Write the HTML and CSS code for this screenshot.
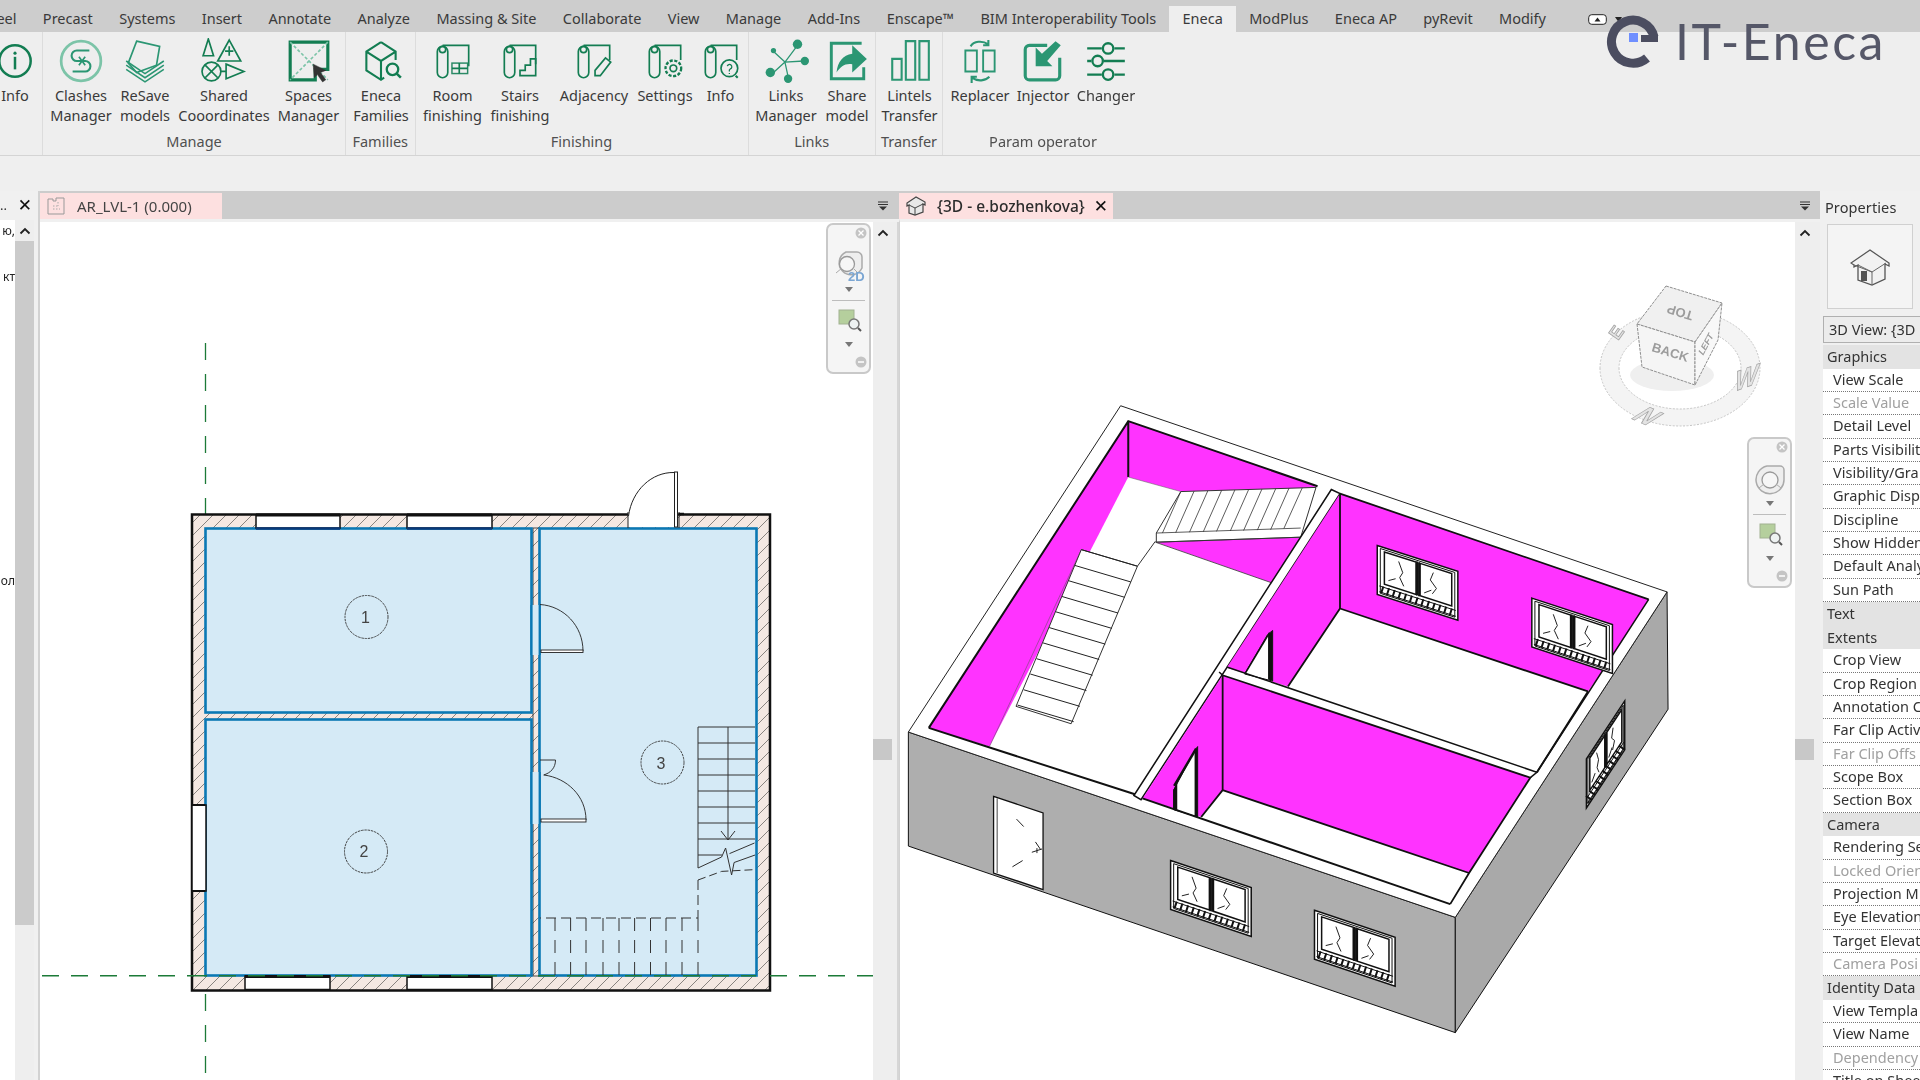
FILE: index.html
```html
<!DOCTYPE html>
<html lang="en">
<head>
<meta charset="utf-8">
<title>Revit - Eneca ribbon</title>
<link rel="stylesheet" href="styles.css">
</head>
<body>
<div class="app">
  <nav class="tabs">
    <span class="tab tab-cut">Steel</span><span class="tab">Precast</span><span class="tab">Systems</span><span class="tab">Insert</span><span class="tab">Annotate</span><span class="tab">Analyze</span><span class="tab">Massing &amp; Site</span><span class="tab">Collaborate</span><span class="tab">View</span><span class="tab">Manage</span><span class="tab">Add-Ins</span><span class="tab">Enscape™</span><span class="tab">BIM Interoperability Tools</span><span class="tab tab-on">Eneca</span><span class="tab">ModPlus</span><span class="tab">Eneca AP</span><span class="tab">pyRevit</span><span class="tab">Modify</span>
    <span class="min-btn"><svg width="19" height="11" viewBox="0 0 19 11"><rect x=".7" y=".7" width="17.6" height="9.6" rx="3" fill="#fff" stroke="#222"/><path d="M6.500 7.500h6L9.500 3.500z" fill="#222"/></svg><svg class="min-caret" width="7" height="5" viewBox="0 0 7 5"><path d="M0 0h7L3.500 5z" fill="#222"/></svg></span>
  </nav>

  <section class="ribbon">
    <div class="panel p-info">
      <div class="items">
        <div class="item"><svg class="ico" viewBox="0 0 44 44"><circle cx="22" cy="22" r="15" stroke-width="2.4"/><path d="M22 18v12" stroke-width="2.4"/><circle class="d" cx="22" cy="14.5" r="1.5"/></svg><span class="lbl">Info</span></div>
      </div>
      <div class="ptitle">&nbsp;</div>
    </div>
    <div class="panel p-manage">
      <div class="items">
        <div class="item"><svg class="ico" viewBox="0 0 44 44"><circle class="lt" cx="22" cy="22" r="19" stroke-width="2.6"/><path class="md" d="M30 12H18a5 5 0 0 0 0 10h4M14 32h12a5 5 0 0 0 0-10h-4" stroke-width="2"/><path class="md" d="M20 18l3 4-3 4M26 18l-3 4 3 4" stroke-width="1.6"/></svg><span class="lbl">Clashes<br>Manager</span></div>
        <div class="item"><svg class="ico" viewBox="0 0 44 44"><path class="md" d="M14 3l22 5-3 18-19 7-8-9z" stroke-width="1.6"/><path class="md" d="M4 26l18 12 18-12M4 30l18 12 18-12M4 22l18 12 18-12" stroke-width="1.5"/></svg><span class="lbl">ReSave<br>models</span></div>
        <div class="item"><svg class="ico" viewBox="0 0 44 44"><path d="M7 1l5 16H2z"/><path d="M27 2l11 20H16z"/><path d="M27 8v9M23 12.500h8"/><circle cx="10" cy="32" r="9"/><path d="M4 26l12 12M16 26L4 38"/><path d="M24 25l17 7-17 7zM19 32h5"/></svg><span class="lbl">Shared<br>Cooordinates</span></div>
        <div class="item"><svg class="ico" viewBox="0 0 44 44"><path d="M4 4h36v26H28v10H4z" stroke-width="3"/><path class="lt" d="M4 4l36 36M40 4L4 40" stroke-dasharray="3 2"/><path class="k" d="M26 25l12 6-5 2 5 7-3 2-5-7-3 3z"/></svg><span class="lbl">Spaces<br>Manager</span></div>
      </div>
      <div class="ptitle">Manage</div>
    </div>
    <div class="panel p-fam">
      <div class="items">
        <div class="item"><svg class="ico" viewBox="0 0 44 44"><path d="M22 4l14 9v8M22 4L8 13v18l14 9 3-2M8 13l14 9 14-9M22 22v17" stroke-width="2"/><circle cx="33" cy="30" r="5.500" stroke-width="2.200"/><path d="M37 34l4 4" stroke-width="2.400"/></svg><span class="lbl">Eneca<br>Families</span></div>
      </div>
      <div class="ptitle">Families</div>
    </div>
    <div class="panel p-fin">
      <div class="items">
        <div class="item"><svg class="ico" viewBox="0 0 44 44"><rect x="7" y="8" width="10" height="30" rx="5"/><circle cx="12" cy="11" r="3"/><path d="M12 7h25v20"/><rect class="m" x="21" y="24" width="15" height="10" stroke-width="1.400"/><path d="M21 29h15M28 24v10"/></svg><span class="lbl">Room<br>finishing</span></div>
        <div class="item"><svg class="ico" viewBox="0 0 44 44"><rect x="7" y="8" width="10" height="30" rx="5"/><circle cx="12" cy="11" r="3"/><path d="M12 7h25v18"/><path d="M22 36v-5h5v-5h5v-6h5v16z"/></svg><span class="lbl">Stairs<br>finishing</span></div>
        <div class="item"><svg class="ico" viewBox="0 0 44 44"><rect x="7" y="8" width="10" height="30" rx="5"/><circle cx="12" cy="11" r="3"/><path d="M12 7h25v14"/><path d="M23 36v-5l10-12 5 4-10 13z"/></svg><span class="lbl">Adjacency</span></div>
        <div class="item"><svg class="ico" viewBox="0 0 44 44"><rect x="7" y="8" width="10" height="30" rx="5"/><circle cx="12" cy="11" r="3"/><path d="M12 7h25v14"/><circle cx="30" cy="29" r="3.200"/><circle cx="30" cy="29" r="7.500" stroke-dasharray="3 1.500" stroke-width="2.200"/></svg><span class="lbl">Settings</span></div>
        <div class="item"><svg class="ico" viewBox="0 0 44 44"><rect x="7" y="8" width="10" height="30" rx="5"/><circle cx="12" cy="11" r="3"/><path d="M12 7h25v14"/><circle cx="30" cy="29" r="8"/><path d="M28 27a2.200 2.200 0 1 1 3 2.500l-1 1v1.500M30 33.500v1" stroke-width="1.200"/><path d="M36 36l2 2" stroke-width="2"/></svg><span class="lbl">Info</span></div>
      </div>
      <div class="ptitle">Finishing</div>
    </div>
    <div class="panel p-links">
      <div class="items">
        <div class="item"><svg class="ico" viewBox="0 0 44 44"><path class="md" d="M21 23L9 34M21 23l12-16M21 23L9 12M21 23l18-1M21 23l3 14" stroke-width="1.200"/><circle class="tf" cx="33" cy="6" r="4.500"/><circle class="tf" cx="7" cy="33" r="4.500"/><circle class="tf" cx="40" cy="22" r="4"/><circle class="tf" cx="24" cy="39" r="4"/><circle class="tf" cx="10" cy="12" r="2.500"/></svg><span class="lbl">Links<br>Manager</span></div>
        <div class="item"><svg class="ico" viewBox="0 0 44 44"><path class="md" d="M38 28v11H7V5h29" stroke-width="2.800"/><path class="tf" d="M27 7l14 13-14 13v-8c-7-1-11 2-15 8 1-10 6-17 15-18z"/></svg><span class="lbl">Share<br>model</span></div>
      </div>
      <div class="ptitle">Links</div>
    </div>
    <div class="panel p-trans">
      <div class="items">
        <div class="item"><svg class="ico" viewBox="0 0 44 44"><path class="md" d="M5 20h9v20H5zM18 3h9v37h-9zM31 3h9v37h-9z" stroke-width="2"/></svg><span class="lbl">Lintels<br>Transfer</span></div>
      </div>
      <div class="ptitle">Transfer</div>
    </div>
    <div class="panel p-param">
      <div class="items">
        <div class="item"><svg class="ico" viewBox="0 0 44 44"><path class="md" d="M8 12h11v20H8zM25 12h11v20H25z" stroke-width="1.800"/><path class="md" d="M13 8c3-5 11-6 17-2M30 2l0 5-5 0M31 37c-4 4-11 5-17 1M14 43v-6h5" stroke-width="2"/></svg><span class="lbl">Replacer</span></div>
        <div class="item"><svg class="ico" viewBox="0 0 44 44"><path class="md" d="M26 7H9a4 4 0 0 0-4 4v25a4 4 0 0 0 4 4h25a4 4 0 0 0 4-4V19" stroke-width="3"/><path class="tf" d="M34 3l5 4-13 15 5 5H15V9l6 6z"/></svg><span class="lbl">Injector</span></div>
        <div class="item"><svg class="ico" viewBox="0 0 44 44"><path d="M4 10h14M30 10h10M4 22h4M20 22h20M4 35h14M30 35h10" stroke-width="2.200"/><circle cx="24" cy="10" r="5" stroke-width="2.200"/><circle cx="14" cy="22" r="5" stroke-width="2.200"/><circle cx="24" cy="35" r="5" stroke-width="2.200"/></svg><span class="lbl">Changer</span></div>
      </div>
      <div class="ptitle">Param operator</div>
    </div>
  </section>

  <div class="optbar"></div>

  <main class="work">
    <aside class="browser">
      <div class="br-head"><span class="dots">..</span><span class="x">✕</span></div>
      <div class="br-body">
        <div class="br-text"><span class="l1">ю,</span><span class="l2">кт</span><span class="l3">ол</span></div>
        <div class="br-scroll"><div class="caret"><svg width="12" height="8" viewBox="0 0 12 8"><path d="M1.500 6.500L6 2l4.500 4.500" fill="none" stroke="#222" stroke-width="1.800"/></svg></div><div class="br-thumb"></div></div>
      </div>
    </aside>

    <section class="view view-l">
      <div class="strip">
        <div class="vtab vtab-l"><svg class="vtab-ico" width="18" height="18" viewBox="0 0 18 18"><path d="M1 2h5v2h3V1h8v16H1z" fill="none" stroke="#999"/><path d="M6 9h5M6 12h7M11 5v4" fill="none" stroke="#aaa" stroke-dasharray="1.500 1.500"/></svg><span>AR_LVL-1 (0.000)</span></div>
        <span class="list-ico"><svg width="10" height="10" viewBox="0 0 10 10"><path d="M0 1h10M0 3.500h10" stroke="#333"/><path d="M1 5.500h8L5 9.500z" fill="#333"/></svg></span>
      </div>
      <div class="vbody">
        <div class="canvas">
          <svg class="draw" viewBox="40 222 833 858">
            <defs>
              <pattern id="hatch" width="13" height="13" patternUnits="userSpaceOnUse"><rect width="13" height="13" fill="#f4e8e2"/><path d="M0 13L13 0" stroke="#7d7875" stroke-width=".9"/></pattern>
            </defs>
            <path d="M205.500 343V1080" stroke="#1c7a38" stroke-width="1.300" stroke-dasharray="17 14" fill="none"/>
            <rect x="192" y="514.500" width="578" height="476" fill="url(#hatch)" stroke="#111" stroke-width="2.500"/>
            <rect x="533" y="528" width="7" height="448" fill="url(#hatch)" stroke="#222" stroke-width=".8"/>
            <rect x="205.500" y="528.500" width="326" height="184" fill="#d5eaf6" stroke="#0b78b4" stroke-width="2.600"/>
            <rect x="205.500" y="719.500" width="326" height="256" fill="#d5eaf6" stroke="#0b78b4" stroke-width="2.600"/>
            <rect x="539.500" y="528.500" width="217" height="447" fill="#d5eaf6" stroke="#0b78b4" stroke-width="2.600"/>
            <!-- windows -->
            <g fill="#fff" stroke="#111" stroke-width="1.500">
              <rect x="256" y="515" width="84" height="13"/><rect x="407" y="515" width="85" height="13"/>
              <rect x="245" y="976" width="85" height="13.500"/><rect x="407" y="976" width="85" height="13.500"/>
              <rect x="192" y="805" width="14" height="86"/>
            </g>
            <path d="M256 515h84M407 515h85M245 976.500h85M407 976.500h85" stroke="#111" stroke-width="3.200" fill="none"/>
            <path d="M256 528.500h84M407 528.500h85" stroke="#0a3a7a" stroke-width="2.400" fill="none"/>
            <path d="M192 805h13M192 891h13" stroke="#111" stroke-width="2"/>
            <!-- entry door -->
            <rect x="628" y="510" width="50" height="17" fill="#fff"/>
            <path d="M628 512v16M679 512v16M628.500 516C632 490 652 472 674 472.500" fill="none" stroke="#222" stroke-width="1"/>
            <rect x="674.500" y="472" width="3" height="55" fill="#fff" stroke="#222"/>
            <path d="M679 514h5" stroke="#111" stroke-width="2.500"/>
            <!-- interior doors -->
            <rect x="531" y="605" width="9" height="50" fill="#d5eaf6"/>
            <rect x="531" y="772" width="9" height="52" fill="#d5eaf6"/>
            <path d="M531.500 605v50M531.500 772v52M539.700 605v50M539.700 772v52" stroke="#0b78b4" stroke-width="2.200"/>
            <path d="M540 604.500C564 606 583 626 583 651M544 775C567 778 586 796 586 820M540 760h15.500c0 8-5 13-12 15" fill="none" stroke="#222" stroke-width=".9"/>
            <rect x="541" y="650" width="42" height="2.500" fill="#fff" stroke="#222" stroke-width=".9"/>
            <rect x="541" y="819" width="45" height="3" fill="#fff" stroke="#222" stroke-width=".9"/>
            <!-- stairs -->
            <g fill="none" stroke="#333" stroke-width="1">
              <path d="M698 727h57M698 743h57M698 759h57M698 775h57M698 791h57M698 807h57M698 823h57M698 839h57M698 855h24"/>
              <path d="M698 727v141M728 727v112M721 831l7 9 7-9"/>
              <path d="M698 868l23.600-11 4-9 6 27 2.500-12.500 21-7.500M729.500 853.600l25-10.600"/>
              <path d="M698 880l23.600-8.600 33.400-1.800" stroke-dasharray="8 4"/>
              <path d="M698 880v38H540" stroke-dasharray="10 5"/>
              <path d="M555 918v58M570.600 918v58M586 918v58M603 918v58M619 918v58M634.600 918v58M650.500 918v58M666 918v58M682 918v58M698 918v58" stroke-dasharray="13 9"/>
            </g>
            <!-- tags -->
            <g fill="none" stroke="#333" stroke-width=".9" stroke-dasharray="2.500 .8">
              <circle cx="366.500" cy="617" r="21.500"/><circle cx="366" cy="851.500" r="21.500"/><circle cx="662.500" cy="762.500" r="21.500"/>
            </g>
            <g class="tag"><text x="361" y="623">1</text><text x="359.500" y="857">2</text><text x="656.500" y="769">3</text></g>
            <path d="M42 975.700H190M190 975.700H756M770 975.700H873" stroke="#1c7a38" stroke-width="1.500" stroke-dasharray="17 12" fill="none"/>
          </svg>
          <div class="navbar nav-l">
            <svg class="nb-close" width="12" height="12" viewBox="0 0 12 12"><circle cx="6" cy="6" r="5.500" fill="#c4c4c4"/><path d="M3.500 3.500l5 5M8.500 3.500l-5 5" stroke="#fff" stroke-width="1.300"/></svg>
            <svg class="nb-wheel" width="34" height="34" viewBox="0 0 34 34"><path d="M14 3h11a5 5 0 0 1 5 5v11a12 12 0 1 1-16-16z" fill="#eee" stroke="#aaa" stroke-width="1.500"/><circle cx="15" cy="15" r="7.500" fill="#f6f6f6" stroke="#999" stroke-width="1.300"/><path d="M4 24l6-5M22 20l4 4" stroke="#aaa"/><text class="t2d" x="16" y="32">2D</text></svg>
            <i class="nb-caret"></i><hr class="nb-rule">
            <svg class="nb-zoom" width="24" height="24" viewBox="0 0 24 24"><rect x="1" y="1" width="15" height="14" fill="#b5cf9d" stroke="#a2b292"/><circle cx="16" cy="15" r="5" fill="#eef2f2" stroke="#777" stroke-width="1.500"/><path d="M20 19l3 3" stroke="#555" stroke-width="2"/></svg>
            <i class="nb-caret"></i>
            <svg class="nb-min" width="12" height="12" viewBox="0 0 12 12"><circle cx="6" cy="6" r="5.500" fill="#c4c4c4"/><path d="M3 6h6" stroke="#fff" stroke-width="1.500"/></svg>
          </div>
        </div>
        <div class="vscroll"><div class="caret"><svg width="12" height="8" viewBox="0 0 12 8"><path d="M1.500 6.500L6 2l4.500 4.500" fill="none" stroke="#222" stroke-width="1.800"/></svg></div><div class="thumb"></div></div>
      </div>
    </section>

    <section class="view view-r">
      <div class="strip">
        <div class="vtab vtab-r"><svg class="vtab-ico" width="20" height="20" viewBox="0 0 20 20"><path d="M10 1L1 7v3l2-1v8l6 2 8-3V8l2 1V6z" fill="#e8e8e8" stroke="#444" stroke-width="1.200"/><path d="M3 9l6 3 8-4M9 12v7" fill="none" stroke="#444"/></svg><span>{3D - e.bozhenkova}</span><span class="x x-tab">✕</span></div>
        <span class="list-ico"><svg width="10" height="10" viewBox="0 0 10 10"><path d="M0 1h10M0 3.500h10" stroke="#333"/><path d="M1 5.500h8L5 9.500z" fill="#333"/></svg></span>
      </div>
      <div class="vbody">
        <div class="canvas">
          <svg class="draw model" viewBox="900 222 895 858">
            <defs>
              <g id="win">
                <rect width="158" height="118" fill="#fff" stroke="#111" stroke-width="1.500"/>
                <rect x="6" y="5" width="146" height="108" fill="#fff" stroke="#111"/>
                <rect x="14" y="10" width="62" height="78" fill="#fff" stroke="#111" stroke-width="1.500"/>
                <rect x="84" y="10" width="62" height="78" fill="#fff" stroke="#111" stroke-width="1.500"/>
                <path d="M78 8v82M82 8v82" stroke="#111" stroke-width="2"/>
                <path d="M42 22l8 24-6 14 8 18M110 22l-6 20 12 16-8 16M22 76l14-10M92 78l14-12" fill="none" stroke="#222"/>
                <path d="M4 96h150M4 110h150" stroke="#111"/>
                <path d="M8 103h142" stroke="#111" stroke-width="7" stroke-dasharray="2 4"/>
              </g>
            </defs>
            <g transform="translate(890 390) scale(.5102 .4146)">
              <polygon points="36,825 1108,1272 1108,1550 36,1100" fill="#aeaeae" stroke="#111"/>
              <polygon points="1108,1272 1523,487 1525,770 1108,1550" fill="#a9a9a9" stroke="#111"/>
              <polygon points="452,38 1523,487 1108,1272 36,825" fill="#fff" stroke="#222" stroke-width="1"/>
              <polygon points="467,75 1487,505 1098,1240 76,815" fill="#fff" stroke="none"/>
              <!-- stair room magenta -->
              <polygon points="467,75 467,210 195,860 76,815" fill="#ff33ff"/>
              <polygon points="467,75 838,232 800,240 570,245 467,210" fill="#ff33ff"/>
              <polygon points="522,367 805,355 748,465" fill="#ff33ff"/>
              <path d="M467 75v135M76 815L467 75L838 232M76 815l404 160" fill="none" stroke="#111" stroke-width="2"/>
              <path d="M467 210l103 35M195 860l180-475" fill="none" stroke="#555" stroke-width=".5"/>
              <!-- upper stair -->
              <path d="M522 345l48-100 265-10-30 120-283 12z" fill="#fff" stroke="#333"/>
              <path d="M522 345l283-12M522 367l283-12M520 367l228 98M570 245l-36 100M596 244l-36 100M623 243l-36 100M650 242l-36 100M676 241l-36 100M703 240l-36 100M729 239l-36 100M756 238l-36 100M782 237l-36 100M808 236l-36 98" fill="none" stroke="#333" stroke-width=".8"/>
              <!-- lower stair -->
              <path d="M375 385l110 40-130 380-108-42z" fill="#fff" stroke="#333"/>
              <path d="M375 385l110 40M362 423l110 40M350 460l110 40M337 498l110 40M325 535l110 40M312 573l110 40M300 610l110 40M287 648l110 40M275 685l110 40M262 723l110 40M250 760l110 40" fill="none" stroke="#222" stroke-width="1"/>
              <path d="M485 425l35-60" fill="none" stroke="#333"/>
              <!-- partition corridor -->
              <polygon points="865,240 882,250 492,988 478,978" fill="#fff" stroke="#111" stroke-width="1.500"/>
              <!-- upper room -->
              <polygon points="882,250 1487,505 1395,680 1368,727 882,527" fill="#ff33ff"/>
              <polygon points="882,250 882,527 780,715 660,670" fill="#ff33ff"/>
              <polygon points="882,527 1368,727 1268,922 780,715" fill="#fff"/>
              <path d="M882 250v277M882 250L1487 505M882 527L1368 727M882 527L780 715M1368 727L1268 922" fill="none" stroke="#111" stroke-width="1.800"/>
              <polygon points="695,685 740,590 750,580 750,702" fill="#fff" stroke="#111"/>
              <path d="M696 684L744 585" fill="none" stroke="#111" stroke-width="1.500"/>
              <polygon points="741,590 750,580 750,702 741,698" fill="#111"/>
              <!-- lower room -->
              <polygon points="652,688 1255,935 1135,1165 652,965" fill="#ff33ff"/>
              <polygon points="652,688 652,965 610,1030 495,985" fill="#ff33ff"/>
              <polygon points="652,965 1135,1165 1098,1240 610,1030" fill="#fff"/>
              <path d="M652 688v277M652 688L1255 935L1135 1165L1098 1240M652 965L610 1030M652 965L1135 1165" fill="none" stroke="#111" stroke-width="1.800"/>
              <path d="M660 668L1268 922L1255 935M1268 922L1487 505M645 680l7 8" fill="none" stroke="#111" stroke-width="1.500"/>
              <polygon points="556,965 597,870 603,860 603,1030 556,1012" fill="#fff" stroke="#111"/>
              <path d="M557 955L600 865" fill="none" stroke="#111" stroke-width="2.500"/>
              <polygon points="555,965 563,948 563,1016 555,1012" fill="#111"/>
              <polygon points="597,870 603,860 603,1030 597,1028" fill="#111"/>
              <path d="M495 985l603 255" fill="none" stroke="#111" stroke-width="2"/>
              <!-- windows -->
              <use href="#win" transform="matrix(1 .395 0 1 955 375)"/>
              <use href="#win" transform="matrix(1 .405 0 1 1258 502)"/>
              <use href="#win" transform="matrix(1 .41 0 1 550 1135)"/>
              <use href="#win" transform="matrix(1 .41 0 1 832 1255)"/>
              <use href="#win" transform="matrix(.475 -.886 0 1 1365 890)"/>
              <!-- entry door -->
              <polygon points="203,980 300,1020 300,1205 203,1165" fill="#fff" stroke="#111" stroke-width="1.300"/>
              <path d="M210 985v180" stroke="#111" stroke-width=".8"/>
              <path d="M248 1035l14 18M285 1090l10 18M240 1150l20-15M278 1115l20-8M288 1105v12" stroke="#222" fill="none"/>
            </g>
            <!-- view cube -->
            <g class="cube">
              <path fill-rule="evenodd" d="M1600 368a80 58 0 1 0 160 0a80 58 0 1 0-160 0zM1619 368a61 41 0 1 0 122 0a61 41 0 1 0-122 0z" fill="#f4f4f4" stroke="#c6c6c6" stroke-dasharray="2 1.500"/>
              <ellipse cx="1672" cy="375" rx="42" ry="16" fill="#e8e8e8" opacity=".7"/>
              <polygon points="1666,286 1722,303 1695,342 1637,324" fill="#f0f0f0" stroke="#8f8f8f" stroke-dasharray="3 1"/>
              <polygon points="1637,324 1695,342 1695,385 1642,367" fill="#f5f5f5" stroke="#8f8f8f" stroke-dasharray="3 1"/>
              <polygon points="1695,342 1722,303 1718,340 1695,385" fill="#f8f8f8" stroke="#8f8f8f" stroke-dasharray="3 1"/>
              <text transform="translate(1694 312) rotate(197)" class="ct">TOP</text>
              <text transform="translate(1651 351) rotate(17)" class="ct">BACK</text>
              <text transform="translate(1703 356) rotate(-62) skewX(-14)" class="ct small">LEFT</text>
              <text transform="translate(1630 418) rotate(24) skewX(-34)" class="cr">N</text>
              <text transform="translate(1733 392) rotate(-20) skewX(-32)" class="cr">W</text>
              <text transform="translate(1618 341) rotate(-55)" class="cr sm">E</text>
            </g>
          </svg>
          <div class="navbar nav-r">
            <svg class="nb-close" width="12" height="12" viewBox="0 0 12 12"><circle cx="6" cy="6" r="5.500" fill="#c4c4c4"/><path d="M3.500 3.500l5 5M8.500 3.500l-5 5" stroke="#fff" stroke-width="1.300"/></svg>
            <svg class="nb-wheel" width="34" height="34" viewBox="0 0 34 34"><path d="M14 3h13a4 4 0 0 1 4 4v9a14 14 0 1 1-17-13z" fill="#eee" stroke="#aaa" stroke-width="1.500"/><circle cx="17" cy="17" r="8" fill="#f6f6f6" stroke="#999" stroke-width="1.300"/><path d="M6 25l5-4M23 21l5 4" stroke="#aaa"/></svg>
            <i class="nb-caret"></i><hr class="nb-rule">
            <svg class="nb-zoom" width="24" height="24" viewBox="0 0 24 24"><rect x="1" y="1" width="15" height="14" fill="#b5cf9d" stroke="#a2b292"/><circle cx="16" cy="15" r="5" fill="#eef2f2" stroke="#777" stroke-width="1.500"/><path d="M20 19l3 3" stroke="#555" stroke-width="2"/></svg>
            <i class="nb-caret"></i>
            <svg class="nb-min" width="12" height="12" viewBox="0 0 12 12"><circle cx="6" cy="6" r="5.500" fill="#c4c4c4"/><path d="M3 6h6" stroke="#fff" stroke-width="1.500"/></svg>
          </div>
        </div>
        <div class="vscroll"><div class="caret"><svg width="12" height="8" viewBox="0 0 12 8"><path d="M1.500 6.500L6 2l4.500 4.500" fill="none" stroke="#222" stroke-width="1.800"/></svg></div><div class="thumb"></div></div>
      </div>
    </section>

    <aside class="props">
      <div class="p-head">Properties</div>
      <div class="p-type">
        <div class="p-thumb"><svg width="40" height="38" viewBox="0 0 40 38"><path d="M20 2L1 15l3 2v2l4-2v15l14 5 13-6V16l4 2v-3z" fill="#f2f2f2" stroke="#555" stroke-width="1.300"/><path d="M4 17L22 24 36 15M8 17l14 7v13" fill="none" stroke="#666"/><rect x="11" y="23" width="6" height="10" fill="#555"/></svg></div>
      </div>
      <div class="p-select">3D View: {3D</div>
      <div class="grp">Graphics</div>
      <div class="row">View Scale</div>
      <div class="row off">Scale Value</div>
      <div class="row">Detail Level</div>
      <div class="row">Parts Visibilit</div>
      <div class="row">Visibility/Gra</div>
      <div class="row">Graphic Disp</div>
      <div class="row">Discipline</div>
      <div class="row">Show Hidden</div>
      <div class="row">Default Analy</div>
      <div class="row">Sun Path</div>
      <div class="grp">Text</div>
      <div class="grp">Extents</div>
      <div class="row">Crop View</div>
      <div class="row">Crop Region</div>
      <div class="row">Annotation C</div>
      <div class="row">Far Clip Activ</div>
      <div class="row off">Far Clip Offs</div>
      <div class="row">Scope Box</div>
      <div class="row">Section Box</div>
      <div class="grp">Camera</div>
      <div class="row">Rendering Se</div>
      <div class="row off">Locked Orien</div>
      <div class="row">Projection M</div>
      <div class="row">Eye Elevation</div>
      <div class="row">Target Elevat</div>
      <div class="row off">Camera Posi</div>
      <div class="grp">Identity Data</div>
      <div class="row">View Templa</div>
      <div class="row">View Name</div>
      <div class="row off">Dependency</div>
      <div class="row">Title on Shee</div>
    </aside>
  </main>

  <div class="logo">
    <svg class="logo-mark" width="56" height="56" viewBox="0 0 56 56"><path d="M48 24A21.500 21.500 0 1 0 41 45" fill="none" stroke="#4b4d60" stroke-width="9"/><rect x="35" y="22" width="17" height="7" fill="#4b4d60"/><rect x="23" y="20" width="9" height="9" fill="#6f8fff"/></svg>
    <span class="logo-text">IT-Eneca</span>
  </div>
</div>
</body>
</html>
```
FILE: styles.css
```css
* { box-sizing: border-box; }
html, body { margin: 0; height: 100%; overflow: hidden; background: #eee; }
body { font-family: "Noto Sans", "Open Sans", sans-serif; font-size: 14.500px; color: #3a3a3a; }

.app { position: relative; width: 1920px; height: 1080px; overflow: hidden; display: flex; flex-direction: column; filter: blur(.35px); }

/* ribbon tabs */
.tabs { height: 32px; flex: none; background: #cdcdcd; display: flex; align-items: stretch; margin-left: -30px; white-space: nowrap; }
.tab { display: flex; align-items: center; padding: 3px 13.200px 0; height: 32px; }
.tab-on { background: #eeeeee; margin-top: 6px; height: 26px; padding: 0 13.200px 3px; }
.min-btn { margin: 14px 0 0 29px; display: flex; align-items: flex-start; gap: 8px; }
.min-caret { margin-top: 3px; }

/* ribbon */
.ribbon { height: 124px; flex: none; display: flex; background: #eeeeee; border-bottom: 1.500px solid #d4d4d4; }
.panel { display: flex; flex-direction: column; border-right: 1px solid #dcdcdc; }
.items { flex: 1; display: grid; padding-top: 6px; }
.item { display: flex; flex-direction: column; align-items: center; text-align: center; line-height: 20px; white-space: nowrap; }
.ico { width: 46px; height: 46px; flex: none; margin-bottom: 1px; fill: none; stroke: #137d52; stroke-width: 1.600; }
.ico .lt { stroke: #7cc4a8; }
.ico .md { stroke: #2b9673; }
.ico .tf { fill: #2b9673; stroke: none; }
.ico .d { fill: #137d52; stroke: none; }
.ico .k { fill: #333; stroke: #333; stroke-width: .5; }
.ico .m { stroke: #2b8a66; }
.lbl { display: block; }
.ptitle { height: 27px; text-align: center; line-height: 26px; color: #505050; }
.p-info { width: 43px; }
.p-info .items { grid-template-columns: 30px; }
.p-manage { width: 303px; }
.p-manage .items { grid-template-columns: 76px 52px 106px 63px; }
.p-fam { width: 69.500px; }
.p-fam .items { grid-template-columns: 70px; }
.p-fin { width: 333px; }
.p-fin .items { grid-template-columns: 74px 61px 87px 55px 56px; }
.p-links { width: 127.500px; }
.p-links .items { grid-template-columns: 75px 47px; }
.p-trans { width: 67px; }
.p-trans .items { grid-template-columns: 67px; }
.p-param { width: 200px; border-right: 0; }
.p-param .items { grid-template-columns: 74px 52px 74px; }

.optbar { height: 35px; flex: none; background: #efefef; }

/* workspace */
.work { flex: 1; min-height: 0; display: flex; }

.browser { width: 40px; flex: none; display: flex; flex-direction: column; background: #f0f0f0; border-right: 2px solid #d2d2d2; }
.br-head { height: 29px; flex: none; display: flex; align-items: center; justify-content: space-between; padding: 0 6px 0 0; }
.dots { line-height: 1; color: #333; font-size: 13px; }
.x { font-size: 17px; color: #111; font-family: "DejaVu Sans", sans-serif; line-height: 1; }
.br-body { flex: 1; display: flex; min-height: 0; }
.br-text { width: 15px; flex: none; background: #fff; overflow: hidden; font-size: 12px; color: #222; display: flex; flex-direction: column; align-items: flex-end; white-space: nowrap; }
.l1 { margin-top: 2px; }
.l2 { margin-top: 29px; }
.l3 { margin-top: 287px; }
.br-scroll { width: 19px; flex: none; display: flex; flex-direction: column; background: #eee; }
.caret { height: 21px; flex: none; display: flex; justify-content: center; align-items: center; }
.br-thumb { height: 684px; flex: none; background: #cbcbcb; }

.view { display: flex; flex-direction: column; flex: none; }
.view-l { width: 859px; }
.view-r { width: 921px; }
.strip { height: 28px; flex: none; background: #cccccc; display: flex; justify-content: space-between; align-items: flex-end; }
.vtab { height: 26px; background: #fde0e0; display: flex; align-items: center; white-space: nowrap; }
.vtab-l { width: 182px; padding-left: 7px; gap: 12px; color: #444; font-size: 15px; }
.vtab-r { width: 214px; padding-left: 7px; gap: 11px; color: #2c2c2c; font-weight: 500; font-size: 15.500px; }
.x-tab { margin-left: -2px; font-weight: 400; }
.list-ico { width: 32px; height: 26px; display: flex; align-items: center; justify-content: center; }
.view-r .list-ico { width: 30px; }
.vbody { flex: 1; min-height: 0; display: flex; border-top: 3px solid #f0f0f0; }
.view-r .vbody { border-left: 1px solid #d2d2d2; }
.canvas { position: relative; flex: 1; min-width: 0; background: #fff; }
.draw { display: block; width: 100%; height: 100%; }
.model * { vector-effect: non-scaling-stroke; }
.tag text { font: 16px "Liberation Sans", sans-serif; fill: #444; }
.t2d { font: bold 13px "Liberation Sans", sans-serif; fill: #7ba6d3; }
.ct { font: bold 13px "Liberation Sans", sans-serif; fill: #9c9c9c; }
.ct.small { font-size: 9px; }
.cr { font: bold 26px "Liberation Sans", sans-serif; fill: #e3e3e3; stroke: #a4a4a4; stroke-width: .8; }
.cr.sm { font-size: 18px; }

.vscroll { flex: none; background: #eeeeee; display: flex; flex-direction: column; }
.view-l .vscroll { width: 26px; border-right: 2px solid #d6d6d6; }
.view-r .vscroll { width: 25px; padding-right: 6px; border-right: 0; }
.thumb { height: 21px; width: 19px; flex: none; margin-top: 496px; background: #c8c8c8; }
.view-l .caret { width: 19px; }

/* navigation bars float over the canvas */
.navbar { position: absolute; width: 45px; height: 151px; border: 2px solid #c9c9c9; border-radius: 7px; background: #f5f5f5; display: flex; flex-direction: column; align-items: center; }
.nav-l { left: 786px; top: 1px; }
.nav-r { left: 847px; top: 215px; }
.nb-close { margin: 2px 0 0 24px; }
.nb-wheel { margin-top: 10px; }
.nb-caret { width: 0; height: 0; margin-top: 4px; border-left: 4px solid transparent; border-right: 4px solid transparent; border-top: 5px solid #777; }
.nb-rule { width: 33px; margin: 8px 0 8px; border: 0; border-top: 1px solid #bdbdbd; }
.nb-zoom { margin-left: 2px; }
.nb-zoom + .nb-caret { margin-top: 9px; }
.nb-min { margin: auto 0 4px 24px; }

/* properties */
.props { flex: 1; min-width: 0; background: #f0f0f0; overflow: hidden; padding-left: 3px; white-space: nowrap; color: #333; }
.p-head { height: 33px; line-height: 32px; padding-left: 2px; letter-spacing: .1px; }
.p-type { height: 92px; display: flex; }
.p-thumb { width: 86px; height: 85px; flex: none; margin-left: 4px; background: #f4f4f4; border: 1px solid #d0d0d0; display: flex; align-items: center; justify-content: center; }
.p-select { height: 27px; line-height: 25px; padding-left: 5px; background: #ececec; border: 1px solid #b0b0b0; margin-bottom: 2px; width: 200px; }
.grp { height: 23.700px; line-height: 23px; padding-left: 4px; background: #e3e3e3; }
.row { height: 23.330px; line-height: 21px; padding-left: 10px; background: #fff; border-bottom: 1px dotted #777; overflow: hidden; }
.row.off { color: #a0a0a0; }

/* brand watermark over the ribbon */
.logo { position: absolute; left: 1606px; top: 13px; display: flex; align-items: center; gap: 13px; height: 56px; }
.logo-mark { flex: none; }
.logo-text { font-family: Lato, "Noto Sans", sans-serif; font-weight: 400; font-size: 50px; line-height: 56px; color: #555768; letter-spacing: 2.600px; }
```
